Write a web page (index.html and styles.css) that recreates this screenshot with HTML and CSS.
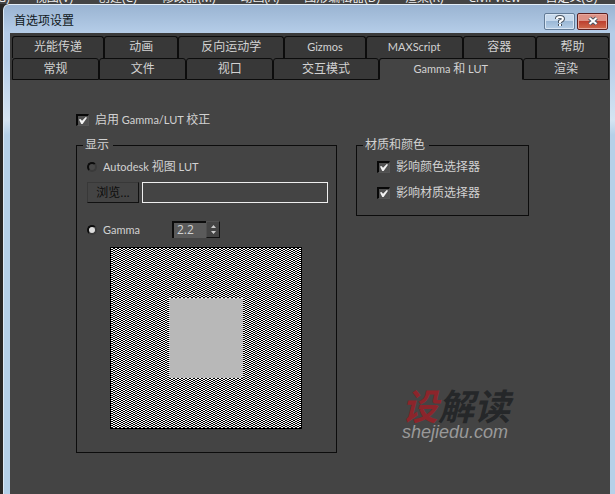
FILE: index.html
```
<!DOCTYPE html>
<html lang="zh-CN">
<head>
<meta charset="utf-8">
<title>首选项设置</title>
<link rel="stylesheet" href="styles.css">
</head>
<body>
<nav class="menu">
  <span>组(G)</span><span>视图(V)</span><span>创建(C)</span><span>修改器(M)</span><span>动画(A)</span><span>图形编辑器(D)</span><span>渲染(R)</span><span>Civil View</span><span>自定义(U)</span>
</nav>
<main class="dialog">
  <header class="titlebar">
    <h1>首选项设置</h1>
    <button class="help" type="button" aria-label="帮助"><svg width="12" height="12" viewBox="0 0 12 12"><path class="halo" d="M3 4V3.500Q3 2 6 2T9 4Q9 5 6 6.500V8M6 9v2"/><path class="mark" d="M3 4V3.500Q3 2 6 2T9 4Q9 5 6 6.500V8M6 9v2"/></svg></button>
    <button class="close" type="button" aria-label="关闭"><svg width="12" height="12" viewBox="0 0 12 12"><path class="halo" d="M2.500 3l7 6M9.500 3l-7 6"/><path class="mark" d="M2.500 3l7 6M9.500 3l-7 6"/></svg></button>
  </header>
  <div class="content">
    <div class="tabs" role="tablist">
      <div class="tab-row upper">
        <button type="button" role="tab">光能传递</button><button type="button" role="tab">动画</button><button type="button" role="tab">反向运动学</button><button type="button" role="tab"><span class="latin">Gizmos</span></button><button type="button" role="tab"><span class="latin">MAXScript</span></button><button type="button" role="tab">容器</button><button type="button" role="tab">帮助</button>
      </div>
      <div class="tab-row lower">
        <button type="button" role="tab">常规</button><button type="button" role="tab">文件</button><button type="button" role="tab">视口</button><button type="button" role="tab">交互模式</button><button type="button" role="tab" class="active" aria-selected="true"><span class="latin">Gamma </span>和<span class="latin"> LUT</span></button><button type="button" role="tab">渲染</button>
      </div>
    </div>
    <div class="panel">
      <label class="option"><input type="checkbox" checked><span>启用<span class="latin"> Gamma/LUT </span>校正</span></label>
      <div class="columns">
        <fieldset class="display">
          <legend>显示</legend>
          <label class="option"><input type="radio" name="mode"><span><span class="latin">Autodesk </span>视图<span class="latin"> LUT</span></span></label>
          <div class="browse">
            <button type="button" disabled>浏览...</button>
            <input type="text" aria-label="LUT 文件" disabled>
          </div>
          <div class="gamma">
            <label class="option"><input type="radio" name="mode" checked><span class="latin">Gamma</span></label>
            <div class="spinner">
              <input type="text" value="2.2" aria-label="Gamma 值">
              <button type="button" aria-label="调整"><svg width="7" height="11" viewBox="0 0 7 11"><path d="M1 4l2.500-3L6 4zM1 7l2.500 3L6 7z"/></svg></button>
            </div>
          </div>
          <div class="swatch"><div class="tone"></div></div>
        </fieldset>
        <div class="side">
          <fieldset class="materials">
            <legend>材质和颜色</legend>
            <label class="option"><input type="checkbox" checked>影响颜色选择器</label>
            <label class="option"><input type="checkbox" checked>影响材质选择器</label>
          </fieldset>
          <div class="brand">
            <div class="brand-name"><span>设</span>解读</div>
            <div class="brand-url">shejiedu.com</div>
          </div>
        </div>
      </div>
    </div>
  </div>
</main>
</body>
</html>
```
FILE: styles.css
```
* { box-sizing: border-box; }
body {
  margin: 0;
  min-height: 100vh;
  display: flex;
  flex-direction: column;
  overflow: hidden;
  background: #292725;
  color: #d2d2d2;
  font: 12px/16px "Open Sans", "Noto Sans CJK SC", sans-serif;
}
button, input { font: inherit; color: inherit; margin: 0; padding: 0; }
.latin { font-family: Lato, "Open Sans", sans-serif; font-size: 11px; white-space: pre; }
.menu {
  height: 4px;
  display: flex;
  align-items: flex-end;
  gap: 25px;
  overflow: hidden;
  white-space: nowrap;
  background: #444;
  color: #eee;
  line-height: 12px;
  margin-left: -18px;
}
.dialog {
  flex: 1;
  display: flex;
  flex-direction: column;
  margin-left: 3px;
  padding: 0 5px 0 6px;
  border-left: 1px solid #dce9f5;
  border-top: 1px solid #e4eef8;
  border-top-left-radius: 6px;
  background: linear-gradient(#9ab4d2, #b5cde8 28px, #b5cde8 55px, #d5e4f2 115px, #b5d0e8 130px);
}
.titlebar {
  height: 28px;
  display: flex;
  align-items: center;
  gap: 2px;
  padding: 4px 2px 0 4px;
}
.titlebar h1 { flex: 1; margin: 0; color: #101820; font-size: 12px; font-weight: 400; }
.titlebar button {
  width: 31px;
  height: 17px;
  border: 1px solid #627b96;
  border-radius: 2px;
  display: grid;
  place-items: center;
  box-shadow: inset 0 0 0 1px #d9e6f4;
  background: linear-gradient(#c6d9ed 45%, #9bb8d6 50%, #b6cee6);
}
.titlebar .close {
  border-color: #5b2020;
  box-shadow: inset 0 0 0 1px #e8a99e;
  background: linear-gradient(#dd9286 45%, #bd4030 50%, #cf6a4c);
}
.titlebar svg { fill: none; }
.halo { stroke: #4b5663; stroke-width: 4; }
.mark { stroke: #fff; stroke-width: 2; }
.content { flex: 1; background: #444; }
.tabs { padding: 3px 1px 0 2px; background: #3a3a3a; }
.tab-row { display: grid; }
.upper { grid-template-columns: 92fr 74fr 106fr 81fr 97fr 73fr 73fr; }
.lower { grid-template-columns: 87fr 87fr 87fr 105fr 144fr 86fr; }
.tab-row button {
  height: 22px;
  border: 1px solid #0c0c0c;
  border-width: 1px 1px 0;
  border-radius: 3px 3px 0 0;
  background: #383838;
  white-space: nowrap;
}
.upper button { padding-bottom: 2px; }
.lower button { padding-bottom: 1px; border-bottom-width: 1px; }
.lower .active { background: #444; border-bottom-color: #444; }
.panel { padding: 32px 81px 40px 66px; }
.option { display: flex; align-items: center; gap: 6px; white-space: nowrap; }
input[type="checkbox"], input[type="radio"] { appearance: none; flex: none; display: grid; place-items: center; }
input[type="checkbox"] {
  width: 13px;
  height: 12px;
  border: 1px solid #555;
  border-top: 2px solid #080808;
  border-left: 2px solid #080808;
  background: #505050;
}
input[type="checkbox"]:checked::after {
  content: "";
  width: 8px;
  height: 7px;
  background: #f2f2f2;
  clip-path: polygon(0 35%, 18% 28%, 38% 55%, 85% 0, 100% 10%, 45% 100%, 28% 100%);
}
input[type="radio"] {
  width: 10px;
  height: 10px;
  border-radius: 50%;
  border: 2px solid #0c0c0c;
  border-right-color: #3a3a3a;
  border-bottom-color: #3a3a3a;
  background: #484848;
}
input[type="radio"]:checked { background: #ddd; }
.columns { display: grid; grid-template-columns: 261fr 173fr; gap: 19px; margin-top: 9px; }
fieldset { min-width: 0; margin: 0; border: 1px solid #0c0c0c; }
legend { padding: 0 4px 0 2px; }
.display { padding: 6px 8px 23px 10px; }
.display legend { margin-left: -4px; }
.browse { display: flex; gap: 3px; margin-top: 7px; }
.browse button {
  width: 52px;
  height: 21px;
  border: 1px solid #383838;
  border-right-color: #111;
  border-bottom-color: #111;
  background: #444;
  color: #0c0c0c;
}
.browse input { flex: 1; min-width: 0; height: 21px; border: 1px solid #eee; background: #444; }
.gamma { display: flex; align-items: center; margin-top: 18px; }
.gamma .option { width: 85px; }
.spinner { display: flex; height: 17px; }
.spinner input {
  width: 34px;
  padding: 0 0 1px 3px;
  border: 0 solid #0c0c0c;
  border-width: 2px 0 0 2px;
  background: #5a5a5a;
}
.spinner button {
  width: 14px;
  display: grid;
  place-items: center;
  border: 1px solid #505050;
  border-right-color: #111;
  border-bottom-color: #111;
  background: #444;
}
.spinner path { fill: #ccc; }
.swatch {
  width: 192px;
  height: 182px;
  margin: 9px 0 0 23px;
  display: grid;
  place-items: center;
  border: 1px solid #000;
  background: conic-gradient(#000 25%, #fff 0 50%, #000 0 75%, #fff 0) 0 0 / 4px 2px;
}
.tone { width: 74px; height: 80px; background: #b8b8b8; }
.side { display: flex; flex-direction: column; justify-content: space-between; }
.materials { display: grid; gap: 10px; padding: 6px 8px 14px 20px; }
.materials legend { margin-left: -14px; }
.brand { margin: 0 0 11px 46px; white-space: nowrap; }
.brand-name { font: italic 700 36px/36px "Noto Sans CJK SC", sans-serif; color: #252729; }
.brand-name span { color: #8c252b; }
.brand-url { font: italic 18px/20px "Liberation Sans", sans-serif; color: #999; }
```
